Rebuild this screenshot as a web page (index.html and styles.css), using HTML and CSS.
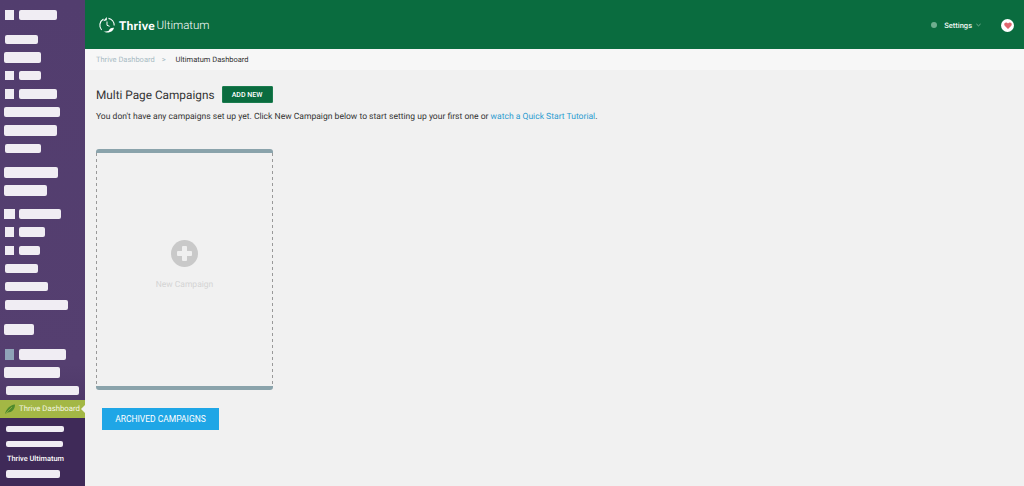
FILE: index.html
```html
<!DOCTYPE html>
<html lang="en">
<head>
  <meta charset="UTF-8" />
  <meta name="viewport" content="width=device-width, initial-scale=1.0"/>
  <title>Thrive Ultimatum</title>
  <link rel="stylesheet" href="styles.css">
</head>
<body>
  <div class="layout">

    <!-- Sidebar -->
    <aside class="sidebar">
      <div class="menu-group">
        <div class="row"><i class="sq"></i><i class="blk w38"></i></div>
      </div>
      <div class="menu-group">
        <div class="row"><i class="blk w33 ml1"></i></div>
        <div class="row"><i class="blk w37 tall"></i></div>
        <div class="row"><i class="sq"></i><i class="blk w22"></i></div>
        <div class="row"><i class="sq"></i><i class="blk w38"></i></div>
        <div class="row"><i class="blk w56"></i></div>
        <div class="row"><i class="blk w53 tall"></i></div>
        <div class="row"><i class="blk w36 ml1"></i></div>
      </div>
      <div class="menu-group tight">
        <div class="row"><i class="blk w54 tall"></i></div>
        <div class="row"><i class="blk w43 tall"></i></div>
      </div>
      <div class="menu-group">
        <div class="row"><i class="sq wide"></i><i class="blk w42"></i></div>
        <div class="row"><i class="sq"></i><i class="blk w26"></i></div>
        <div class="row"><i class="sq"></i><i class="blk w21"></i></div>
        <div class="row"><i class="blk w33 ml1"></i></div>
        <div class="row"><i class="blk w43 ml1"></i></div>
        <div class="row"><i class="blk w63 ml1"></i></div>
      </div>
      <div class="menu-group loose">
        <div class="row"><i class="blk w30 tall"></i></div>
      </div>
      <div class="menu-group last">
        <div class="row"><i class="sq grey"></i><i class="blk w47 tall"></i></div>
        <div class="row"><i class="blk w56 tall"></i></div>
        <div class="row"><i class="blk w73 ml2"></i></div>
      </div>

      <div class="menu-active">
        <svg class="leaf" viewBox="0 0 12 12" width="12" height="12">
          <path d="M1 11C2 6 6 2 11 1.500 11 6 8 9.500 3.500 9.500 3 10 2 10.500 1 11Z" fill="#4f8a2c"/>
          <path d="M1.500 10.500 8 4" stroke="#a9c04a" stroke-width=".6" fill="none"/>
        </svg>
        <span>Thrive Dashboard</span>
      </div>

      <div class="submenu">
        <div class="sub-row"><i class="blk w58 thin"></i></div>
        <div class="sub-row"><i class="blk w57 thin"></i></div>
        <div class="sub-row sub-text">Thrive Ultimatum</div>
        <div class="sub-row"><i class="blk w54 thin8"></i></div>
      </div>
    </aside>

    <!-- Main -->
    <div class="main">
      <header class="topbar">
        <div class="logo">
          <svg viewBox="0 0 18 18" width="18" height="18" fill="none" stroke="#fff">
            <path d="M3.600 14A7.200 7.200 0 0 1 5.500 3" stroke-width="1.100"/>
            <path d="M10.500 2.400A7.200 7.200 0 0 1 16.200 9.500" stroke-width="1.100"/>
            <path d="M5 5.200 8.800 1 8.800 4.200Z" fill="#fff" stroke="none"/>
            <path d="M9 5.500V9.300L11.600 10.300" stroke-width="1"/>
            <path d="M5.500 15.200C7.500 16.800 10 17 12 16 14 15.600 15.600 14 16 11.800 13.200 11.600 11.400 12.800 10.800 14.800 9 15.600 7.200 15.700 5.500 15.200Z" fill="#fff" stroke="none"/>
          </svg>
          <span class="logo-bold">Thrive</span><span class="logo-light">Ultimatum</span>
        </div>
        <div class="top-right">
          <i class="status-dot"></i>
          <span class="settings">Settings</span>
          <svg class="chevron" viewBox="0 0 6 4" width="5" height="4" fill="none" stroke="#a9cdb9"><path d="M.5 .8 3 3 5.500 .8" stroke-width=".8"/></svg>
          <span class="heart-badge">
            <svg viewBox="0 0 10 9" width="8" height="7"><path d="M5 9 .8 4.800C-.6 3.200.3.500 2.600.500 3.600.500 4.500 1 5 1.900 5.500 1 6.400.500 7.400.500 9.700.500 10.600 3.200 9.200 4.800Z" fill="#e0666e"/></svg>
          </span>
        </div>
      </header>

      <nav class="crumbs">
        <a href="#">Thrive Dashboard</a>
        <span class="crumb-sep">&gt;</span>
        <span class="crumb-current">Ultimatum Dashboard</span>
      </nav>

      <section class="content">
        <div class="title-row">
          <h2>Multi Page Campaigns</h2>
          <button class="btn-add">ADD NEW</button>
        </div>
        <p class="intro">You don't have any campaigns set up yet. Click New Campaign below to start setting up your first one or <a href="#">watch a Quick Start Tutorial</a>.</p>

        <div class="new-card">
          <span class="plus"></span>
          <span class="new-label">New Campaign</span>
        </div>

        <button class="btn-archived">ARCHIVED CAMPAIGNS</button>
      </section>
    </div>

  </div>
</body>
</html>
```

FILE: styles.css
```css
html, body {
  margin: 0;
  height: 100%;
}

body {
  background: #f1f1f1;
  font-family: Roboto, "Liberation Sans", sans-serif;
  color: #333;
  overflow: hidden;
  text-rendering: geometricPrecision;
}

.layout {
  display: flex;
  height: 486px;
}

/* SIDEBAR */
.sidebar {
  width: 85px;
  flex-shrink: 0;
  background: linear-gradient(#523d6e, #553f70 75%, #3f2a58);
  padding-top: 6px;
  box-sizing: border-box;
  display: flex;
  flex-direction: column;
}

.menu-group {
  margin-bottom: 6px;
}

.menu-group.tight {
  margin-bottom: 5px;
}

.menu-group.loose {
  margin-bottom: 7px;
}

.menu-group.last {
  margin-bottom: 0;
}

.row {
  height: 18.2px;
  padding-left: 4px;
  display: flex;
  align-items: center;
}

.sidebar i {
  display: block;
  background: #f0edf3;
  height: 9.500px;
  border-radius: 2px;
}

.sidebar .sq {
  width: 9px;
  margin-left: 1px;
  margin-right: 5px;
  border-radius: 0;
}

.sidebar .sq.wide {
  width: 11px;
  margin-left: 0;
  margin-right: 4px;
}

.sidebar .sq.grey {
  background: #8fa4b8;
  height: 11px;
  width: 9px;
}

.sidebar .tall { height: 11px; }
.sidebar .thin { height: 6px; }
.sidebar .thin8 { height: 8px; }
.ml1 { margin-left: 1px; }
.ml2 { margin-left: 2px; }

.w21 { width: 21px; }
.w22 { width: 22px; }
.w26 { width: 26px; }
.w30 { width: 30px; }
.w33 { width: 33px; }
.w36 { width: 36px; }
.w37 { width: 37px; }
.w38 { width: 38px; }
.w42 { width: 42px; }
.w43 { width: 43px; }
.w47 { width: 47px; }
.w53 { width: 53px; }
.w54 { width: 54px; }
.w56 { width: 56px; }
.w57 { width: 57px; }
.w58 { width: 58px; }
.w63 { width: 63px; }
.w73 { width: 73px; }

.menu-active {
  position: relative;
  height: 18px;
  background: #a3b745;
  display: flex;
  align-items: center;
  padding-left: 4px;
  gap: 3px;
  color: #f4f6e4;
  font-size: 7.800px;
  white-space: nowrap;
}

.menu-active::after {
  content: "";
  position: absolute;
  right: 0;
  top: 5px;
  border: 4px solid transparent;
  border-right-color: #f1f1f1;
}

.submenu {
  flex: 1;
  padding-top: 3.500px;
  background: #3f2a58;
}

.sub-row {
  height: 15px;
  padding-left: 6px;
  display: flex;
  align-items: center;
}

.sub-text {
  color: #fff;
  font-size: 7.400px;
  font-weight: 500;
  padding-left: 7px;
}

/* TOP BAR */
.main {
  flex: 1;
  min-width: 0;
}

.topbar {
  height: 49px;
  background: #0a6c3f;
  display: flex;
  align-items: center;
  justify-content: space-between;
  padding: 1px 10px 0 13px;
  box-sizing: border-box;
  color: #fff;
}

.logo {
  display: flex;
  align-items: center;
  font-size: 12px;
  color: #fff;
}

.logo svg {
  margin-right: 3px;
}

.logo-bold {
  font-family: Lato, sans-serif;
  font-weight: 900;
  letter-spacing: .3px;
  margin-right: 1.500px;
}

.logo-light {
  font-family: Roboto, sans-serif;
  font-size: 11.500px;
  font-weight: 300;
}

.top-right {
  display: flex;
  align-items: center;
}

.status-dot {
  display: block;
  width: 6px;
  height: 6px;
  border-radius: 50%;
  background: #6fae8f;
  margin-right: 7px;
}

.settings {
  font-size: 7.500px;
  font-weight: 500;
  color: #eef6f1;
}

.chevron {
  margin-left: 4px;
  margin-right: 20px;
}

.heart-badge {
  width: 13px;
  height: 13px;
  border-radius: 50%;
  background: #fff;
  display: flex;
  align-items: center;
  justify-content: center;
}

/* BREADCRUMB */
.crumbs {
  height: 21px;
  background: #f7f7f7;
  padding-left: 11px;
  display: flex;
  align-items: center;
  font-size: 7.500px;
}

.crumbs a {
  color: #a9bcc4;
  text-decoration: none;
}

.crumb-sep {
  color: #a9bcc4;
  margin: 0 10px 0 7px;
}

.crumb-current {
  color: #333;
}

/* CONTENT */
.content {
  padding: 16px 0 0 11px;
}

.title-row {
  display: flex;
  align-items: center;
  gap: 7px;
}

h2 {
  margin: 0;
  font-size: 11.800px;
  font-weight: 400;
  color: #333;
}

.btn-add {
  width: 51px;
  height: 17px;
  padding: 0;
  background: #0a6c3f;
  border: 1px solid #1b7c4f;
  border-radius: 1px;
  color: #fff;
  font-family: inherit;
  font-size: 7px;
  font-weight: 500;
}

.intro {
  margin: 9px 0 0;
  font-size: 8.550px;
  line-height: 10px;
  color: #333;
}

.intro a {
  color: #2a9bd0;
  text-decoration: none;
}

.new-card {
  width: 177px;
  height: 241px;
  margin-top: 27px;
  box-sizing: border-box;
  border-top: 4px solid #8aa3ab;
  border-bottom: 4px solid #8aa3ab;
  border-radius: 3px;
  background-image:
    repeating-linear-gradient(#999 0 3px, transparent 3px 6px),
    repeating-linear-gradient(#999 0 3px, transparent 3px 6px);
  background-size: 1px 100%;
  background-position: left top, right top;
  background-repeat: no-repeat;
  display: flex;
  flex-direction: column;
  align-items: center;
  padding-top: 87px;
}

.plus {
  position: relative;
  display: block;
  width: 27px;
  height: 27px;
  border-radius: 50%;
  background: #c9c9c9;
}

.plus::before,
.plus::after {
  content: "";
  position: absolute;
  background: #efefef;
  border-radius: 1px;
}

.plus::before {
  left: 6px;
  right: 6px;
  top: 11px;
  bottom: 11px;
}

.plus::after {
  top: 6px;
  bottom: 6px;
  left: 11px;
  right: 11px;
}

.new-label {
  margin-top: 13px;
  font-size: 8.500px;
  color: #d4d4d4;
}

.btn-archived {
  display: block;
  width: 117px;
  height: 22px;
  margin: 18px 0 0 6px;
  padding: 0;
  background: #1fa6e6;
  border: none;
  color: #fff;
  font-family: inherit;
  font-size: 8.500px;
}
```
